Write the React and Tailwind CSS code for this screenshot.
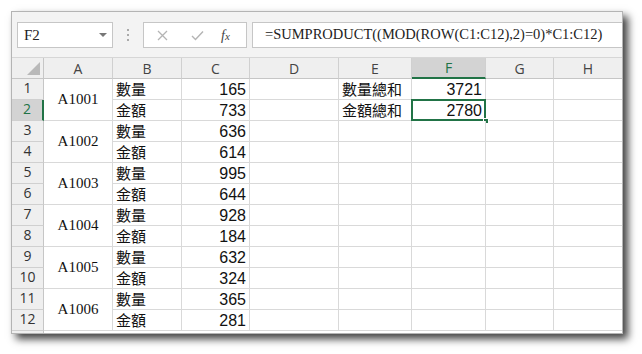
import React from 'react';

const rows = [
  ['A1001', '數量', 165],
  [null, '金額', 733],
  ['A1002', '數量', 636],
  [null, '金額', 614],
  ['A1003', '數量', 995],
  [null, '金額', 644],
  ['A1004', '數量', 928],
  [null, '金額', 184],
  ['A1005', '數量', 632],
  [null, '金額', 324],
  ['A1006', '數量', 365],
  [null, '金額', 281],
];

const serif = "font-['Liberation_Serif','Noto_Sans_CJK_TC',serif]";
const cjk = "font-['Liberation_Sans','Noto_Sans_CJK_TC',sans-serif]";
const head = "font-['Open_Sans','Liberation_Sans',sans-serif]";
const cell = "border-r border-b border-[#d9d9d9] bg-white";
const txt = "flex items-end pb-[1px] leading-[16px] text-[#111]";

function Header({ label, selected }) {
  return (
    <div
      className={`${head} flex items-center justify-center text-[14px] border-r border-[#d0d0d0] ${
        selected
          ? 'bg-[#d3d3d3] text-[#217346] border-b-2 border-b-[#217346]'
          : 'bg-[#efefef] text-[#444] border-b border-b-[#c6c6c6]'
      }`}
    >
      {label}
    </div>
  );
}

function RowHead({ n, selected }) {
  return (
    <div
      className={`${head} flex items-end justify-center pb-[1px] text-[14px] border-b border-[#d0d0d0] ${
        selected
          ? 'bg-[#d3d3d3] text-[#217346] border-r-2 border-r-[#217346]'
          : 'bg-[#efefef] text-[#333] border-r border-r-[#c6c6c6]'
      }`}
    >
      {n}
    </div>
  );
}

export default function App() {
  return (
    <div className="w-[642px] h-[354px] bg-white pl-[11px] pt-[11px]">
      <div className="w-[612px] h-[323px] flex flex-col overflow-hidden border border-[#b4b4b4] bg-white shadow-[5px_5px_8px_rgba(0,0,0,0.75)]">
        {/* formula bar */}
        <div className="h-[46px] flex-shrink-0 flex items-start pt-[10px] pl-[5px] bg-[#f3f3f3] border-b border-[#d6d6d6]">
          <div className="w-[96px] h-[26px] flex items-center justify-between bg-white border border-[#c6c6c6] pl-[6px] pr-[5px]">
            <span className={`${serif} text-[15px] text-[#222]`}>F2</span>
            <svg width="8" height="5" viewBox="0 0 8 5">
              <path d="M0 0 L8 0 L4 4 Z" fill="#777" />
            </svg>
          </div>
          <div className="w-[30px] h-[26px] flex flex-col items-center justify-center gap-[3px]">
            <span className="w-[2px] h-[2px] bg-[#aaa]" />
            <span className="w-[2px] h-[2px] bg-[#aaa]" />
            <span className="w-[2px] h-[2px] bg-[#aaa]" />
          </div>
          <div className="w-[104px] h-[26px] flex items-center bg-white border border-[#c6c6c6]">
            <svg className="ml-[13px]" width="11" height="11" viewBox="0 0 11 11">
              <path d="M1 1 L10 10 M10 1 L1 10" stroke="#b4b4b4" strokeWidth="1.3" />
            </svg>
            <svg className="ml-[23px]" width="13" height="11" viewBox="0 0 13 11">
              <path d="M1 6 L4.5 9.5 L12 1.5" stroke="#b4b4b4" strokeWidth="1.4" fill="none" />
            </svg>
            <span className={`${serif} ml-[17px] italic text-[14px] text-[#444]`}>
              f<span className="text-[11px]">x</span>
            </span>
          </div>
          <div className="flex-1 h-[26px] ml-[5px] flex items-center bg-white border border-[#c6c6c6] border-r-0 pl-[12px]">
            <span className={`${serif} text-[14.5px] text-[#222] whitespace-nowrap`}>
              =SUMPRODUCT((MOD(ROW(C1:C12),2)=0)*C1:C12)
            </span>
          </div>
        </div>

        {/* sheet */}
        <div className="grid grid-cols-[32px_69px_69px_68px_89px_73px_74px_68px_69px] auto-rows-[21px]">
          <div className="bg-[#efefef] border-r border-b border-[#c6c6c6] flex items-end justify-end p-[3px]">
            <svg width="13" height="13" viewBox="0 0 13 13">
              <path d="M13 0 L13 13 L0 13 Z" fill="#b9b9b9" />
            </svg>
          </div>
          {['A', 'B', 'C', 'D', 'E', 'F', 'G', 'H'].map((c) => (
            <Header key={c} label={c} selected={c === 'F'} />
          ))}

          {rows.map(([id, label, val], i) => {
            const n = i + 1;
            return (
              <React.Fragment key={n}>
                <RowHead n={n} selected={n === 2} />
                {id && (
                  <div className={`${cell} ${serif} row-span-2 flex items-center justify-center text-[15px] text-[#111]`}>
                    {id}
                  </div>
                )}
                <div className={`${cell} ${cjk} ${txt} pl-[3px] text-[15px]`}>{label}</div>
                <div className={`${cell} ${cjk} ${txt} justify-end pr-[3px] text-[16px]`}>{val}</div>
                <div className={cell} />
                <div className={`${cell} ${cjk} ${txt} pl-[3px] text-[15px]`}>
                  {n === 1 ? '數量總和' : n === 2 ? '金額總和' : ''}
                </div>
                <div className={`${cell} ${cjk} ${txt} relative justify-end pr-[3px] text-[16px]`}>
                  {n === 1 ? '3721' : n === 2 ? '2780' : ''}
                  {n === 2 && (
                    <>
                      <div className="absolute -left-[1px] -top-[1px] -right-[1px] -bottom-[1px] border-2 border-[#217346]" />
                      <div className="absolute -right-[4px] -bottom-[4px] w-[6px] h-[6px] bg-[#217346] border border-white" />
                    </>
                  )}
                </div>
                <div className={cell} />
                <div className={cell} />
              </React.Fragment>
            );
          })}
          <RowHead n="" />
        </div>
      </div>
    </div>
  );
}
